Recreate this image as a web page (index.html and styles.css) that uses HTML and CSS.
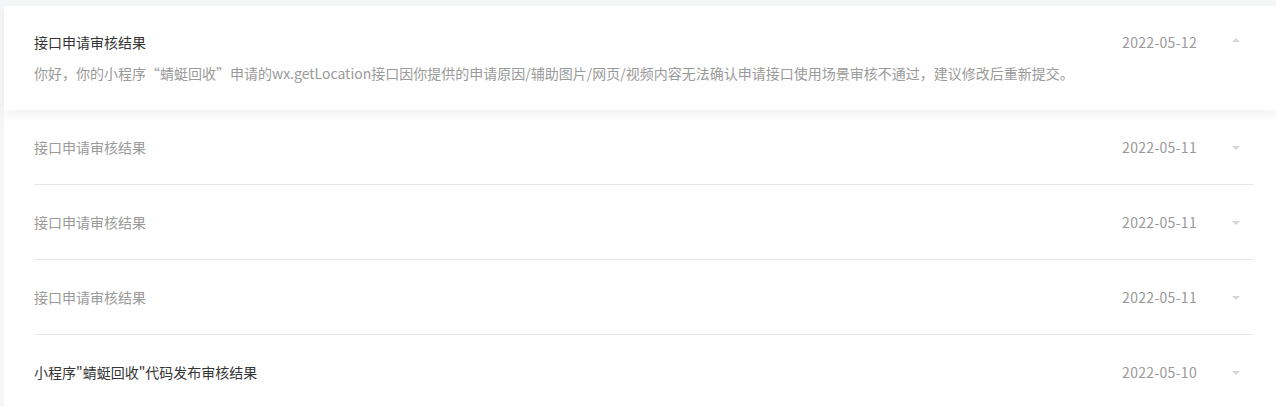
FILE: index.html
```html
<!DOCTYPE html>
<html lang="zh-CN">
<head>
<meta charset="utf-8">
<link rel="stylesheet" href="styles.css">
</head>
<body>
<div class="list">
  <div class="item item-open">
    <div class="head">
      <div class="title dark">接口申请审核结果</div>
      <div class="date">2022-05-12</div>
      <div class="arrow up"></div>
    </div>
    <div class="body">你好，你的小程序“蜻蜓回收”申请的wx.getLocation接口因你提供的申请原因/辅助图片/网页/视频内容无法确认申请接口使用场景审核不通过，建议修改后重新提交。</div>
  </div>
  <div class="item">
    <div class="head line">
      <div class="title">接口申请审核结果</div>
      <div class="date">2022-05-11</div>
      <div class="arrow"></div>
    </div>
  </div>
  <div class="item">
    <div class="head line">
      <div class="title">接口申请审核结果</div>
      <div class="date">2022-05-11</div>
      <div class="arrow"></div>
    </div>
  </div>
  <div class="item">
    <div class="head line">
      <div class="title">接口申请审核结果</div>
      <div class="date">2022-05-11</div>
      <div class="arrow"></div>
    </div>
  </div>
  <div class="item">
    <div class="head">
      <div class="title dark">小程序"蜻蜓回收"代码发布审核结果</div>
      <div class="date">2022-05-10</div>
      <div class="arrow"></div>
    </div>
  </div>
</div>
</body>
</html>
```

FILE: styles.css
```css
html, body {
  margin: 0;
  padding: 0;
  background: #f5f6f7;
}
body {
  padding: 6px 0 0 4px;
  font-family: "Microsoft YaHei", "Noto Sans CJK SC", "Liberation Sans", sans-serif;
  font-size: 14px;
  height: 407px;
  box-sizing: border-box;
  overflow: hidden;
}
.list {
  background: #fff;
  min-height: 401px;
}
.item {
  position: relative;
  background: #fff;
}
.item-open {
  z-index: 1;
  box-shadow: 0 4px 10px rgba(0, 0, 0, 0.06);
  padding: 26px 23px 27px 30px;
}
.item-open .head {
  height: 20px;
}
.item:not(.item-open) {
  padding: 0 23px 0 30px;
}
.item:not(.item-open) .head {
  padding: 27px 0 27px;
}
.head {
  display: flex;
  align-items: center;
  line-height: 20px;
}
.head.line {
  border-bottom: 1px solid #e6e6e6;
}
.title {
  flex: 1;
  color: #9a9a9a;
}
.title.dark {
  color: #353535;
}
.date {
  color: #9a9a9a;
  font-size: 14px;
  letter-spacing: 0.3px;
}
.arrow {
  width: 0;
  height: 0;
  margin: 1px 13px 0 35px;
  border-left: 4px solid transparent;
  border-right: 4px solid transparent;
  border-top: 4px solid #d6d6d6;
}
.arrow.up {
  border-top: none;
  border-bottom: 4px solid #d6d6d6;
  margin-top: -5px;
}
.body {
  margin-top: 11px;
  line-height: 20px;
  color: #9a9a9a;
  white-space: nowrap;
}
```
